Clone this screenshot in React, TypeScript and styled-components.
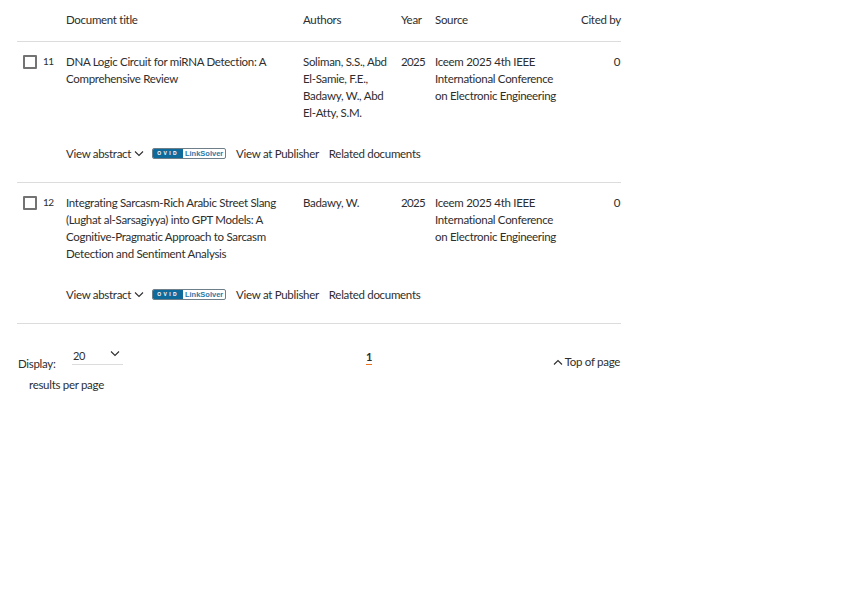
import React from 'react';
import styled, { createGlobalStyle } from 'styled-components';

type Doc = {
  index: number;
  title: string;
  authors: string;
  year: string;
  source: string;
  cited: string;
};

const docs: Doc[] = [
  {
    index: 11,
    title: 'DNA Logic Circuit for miRNA Detection: A Comprehensive Review',
    authors: 'Soliman, S.S., Abd El-Samie, F.E., Badawy, W., Abd El-Atty, S.M.',
    year: '2025',
    source: 'Iceem 2025 4th IEEE International Conference on Electronic Engineering',
    cited: '0',
  },
  {
    index: 12,
    title:
      'Integrating Sarcasm-Rich Arabic Street Slang (Lughat al-Sarsagiyya) into GPT Models: A Cognitive-Pragmatic Approach to Sarcasm Detection and Sentiment Analysis',
    authors: 'Badawy, W.',
    year: '2025',
    source: 'Iceem 2025 4th IEEE International Conference on Electronic Engineering',
    cited: '0',
  },
];

const GlobalStyle = createGlobalStyle`
  body {
    margin: 0;
    background: #fff;
    color: #2e2e2e;
    font-family: Lato, "Liberation Sans", sans-serif;
    font-size: 11.5px;
    letter-spacing: -0.3px;
    line-height: 17px;
  }
`;

const Page = styled.div`
  width: 604px;
  margin-left: 17px;
`;

const columns = '49px 237px 98px 34px 1fr 40px';

const HeaderRow = styled.div`
  display: grid;
  grid-template-columns: ${columns};
  padding-top: 11px;
  box-sizing: border-box;
  border-bottom: 1px solid #dcdcdc;
  height: 42px;
`;

const HeaderCell = styled.div<{ $right?: boolean }>`
  text-align: ${(p) => (p.$right ? 'right' : 'left')};
  padding-right: ${(p) => (p.$right ? '1px' : '0')};
  white-space: nowrap;
`;

const DocRow = styled.div`
  padding: 11px 0 20px;
  border-bottom: 1px solid #dcdcdc;
`;

const DocGrid = styled.div`
  display: grid;
  grid-template-columns: ${columns};
  min-height: 68px;
`;

const Lead = styled.div`
  display: flex;
  align-items: flex-start;
  gap: 6px;
  padding-left: 6px;
`;

const Box = styled.span`
  width: 14px;
  height: 14px;
  margin-top: 2px;
  box-sizing: border-box;
  border: 2px solid #737373;
  border-radius: 1px;
`;

const Index = styled.span`
  font-size: 10px;
  letter-spacing: -0.6px;
`;

const Cell = styled.div<{ $inset?: number }>`
  padding-right: ${(p) => p.$inset ?? 10}px;
`;

const Year = styled.div`
  letter-spacing: -0.7px;
`;

const Numeric = styled.div`
  text-align: right;
  padding-right: 1px;
`;

const Actions = styled.div`
  display: flex;
  align-items: center;
  gap: 10px;
  margin-top: 24px;
  padding-left: 49px;
`;

const Abstract = styled.span`
  display: flex;
  align-items: center;
  gap: 3px;
  margin-right: -2px;
`;

const Badge = styled.span`
  display: flex;
  width: 74px;
  height: 11px;
  box-sizing: border-box;
  border: 1px solid #6f7f8a;
  border-radius: 2px;
  font-family: "Liberation Sans", sans-serif;
  font-weight: 700;
  letter-spacing: 0;
  line-height: 9px;
  overflow: hidden;
`;

const BadgeDark = styled.span`
  width: 30px;
  background: #0f6a9c;
  color: #fff;
  font-size: 5px;
  letter-spacing: 2.4px;
  text-align: center;
`;

const BadgeLight = styled.span`
  flex: 1;
  color: #2a7aa8;
  font-size: 7.5px;
  text-align: center;
`;

const Footer = styled.div`
  display: grid;
  grid-template-columns: 200px 304px 100px;
  margin-top: 23px;
`;

const DisplayArea = styled.div`
  display: flex;
  flex-wrap: wrap;
`;

const DisplayLabel = styled.span`
  margin-top: 8px;
  padding-left: 1px;
  width: 54px;
`;

const Select = styled.div`
  width: 51px;
  height: 18px;
  box-sizing: border-box;
  padding-left: 1px;
  border-bottom: 1px solid #dcdcdc;
  display: flex;
  justify-content: space-between;
  font-size: 11px;
`;

const SelectChevron = styled.span`
  margin: -3px 3px 0 0;
`;

const PerPage = styled.span`
  width: 100%;
  margin: 4px 0 0 12px;
`;

const Pager = styled.div`
  text-align: center;
  padding-top: 1px;
`;

const Current = styled.span`
  display: inline-block;
  font-weight: 700;
  font-size: 11px;
  line-height: 15px;
  border-bottom: 1px solid #e9711c;
`;

const TopLink = styled.div`
  display: flex;
  justify-content: flex-end;
  align-items: center;
  gap: 2px;
  height: 17px;
  margin-top: 6px;
  padding-right: 1px;
`;

const Chevron = ({ up }: { up?: boolean }) => (
  <svg width="10" height="6" viewBox="0 0 10 6" fill="none" stroke="#2e2e2e" strokeWidth="1.1">
    <path d={up ? 'M1 5.5 5 1.5 9 5.5' : 'M1 .5 5 4.5 9 .5'} />
  </svg>
);

export default function App() {
  return (
    <Page>
      <GlobalStyle />
      <HeaderRow>
        <span />
        <HeaderCell>Document title</HeaderCell>
        <HeaderCell>Authors</HeaderCell>
        <HeaderCell>Year</HeaderCell>
        <HeaderCell>Source</HeaderCell>
        <HeaderCell $right>Cited by</HeaderCell>
      </HeaderRow>
      {docs.map((d) => (
        <DocRow key={d.index}>
          <DocGrid>
            <Lead>
              <Box />
              <Index>{d.index}</Index>
            </Lead>
            <Cell>{d.title}</Cell>
            <Cell>{d.authors}</Cell>
            <Year>{d.year}</Year>
            <Cell $inset={18}>{d.source}</Cell>
            <Numeric>{d.cited}</Numeric>
          </DocGrid>
          <Actions>
            <Abstract>
              View abstract <Chevron />
            </Abstract>
            <Badge>
              <BadgeDark>OVID</BadgeDark>
              <BadgeLight>LinkSolver</BadgeLight>
            </Badge>
            <span>View at Publisher</span>
            <span>Related documents</span>
          </Actions>
        </DocRow>
      ))}
      <Footer>
        <DisplayArea>
          <DisplayLabel>Display:</DisplayLabel>
          <Select>
            20
            <SelectChevron>
              <Chevron />
            </SelectChevron>
          </Select>
          <PerPage>results per page</PerPage>
        </DisplayArea>
        <Pager>
          <Current>1</Current>
        </Pager>
        <TopLink>
          <Chevron up />
          Top of page
        </TopLink>
      </Footer>
    </Page>
  );
}
